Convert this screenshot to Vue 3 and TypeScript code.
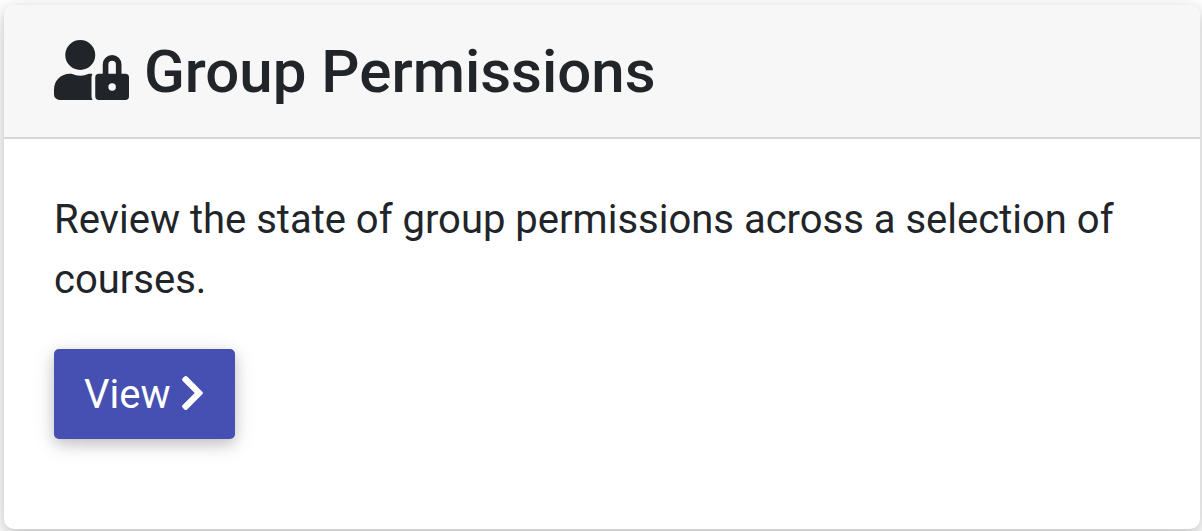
<script setup lang="ts">
const title: string = 'Group Permissions'
const description: string = 'Review the state of group permissions across a selection of courses.'
</script>

<template>
  <main class="page">
    <section class="card">
      <header class="card-header">
        <svg class="lock-icon" viewBox="0 0 640 512" aria-hidden="true">
          <path d="M224 256A128 128 0 1 0 96 128a128 128 0 0 0 128 128zm96 64a63.08 63.08 0 0 1 8.1-30.5c-4.8-.5-9.5-1.5-14.5-1.5h-16.7a174.08 174.08 0 0 1-145.8 0h-16.7A134.43 134.43 0 0 0 0 422.4V464a48 48 0 0 0 48 48h280.9a63.54 63.54 0 0 1-8.9-32zm288-32h-32v-80a80 80 0 0 0-160 0v80h-32a32 32 0 0 0-32 32v160a32 32 0 0 0 32 32h224a32 32 0 0 0 32-32V320a32 32 0 0 0-32-32zM496 432a32 32 0 1 1 32-32 32 32 0 0 1-32 32zm32-144h-64v-80a32 32 0 0 1 64 0z" />
        </svg>
        <h1>{{ title }}</h1>
      </header>
      <div class="card-body">
        <p>{{ description }}</p>
        <button type="button" class="view-button">
          <span>View</span>
          <svg class="chevron" viewBox="0 0 320 512" aria-hidden="true">
            <path d="M285.476 272.971L91.132 467.314c-9.373 9.373-24.569 9.373-33.941 0l-22.667-22.667c-9.357-9.357-9.375-24.522-.04-33.901L188.505 256 34.484 101.255c-9.335-9.379-9.317-24.544.04-33.901l22.667-22.667c9.373-9.373 24.569-9.373 33.941 0L285.475 239.03c9.373 9.372 9.373 24.568.001 33.941z" />
          </svg>
        </button>
      </div>
    </section>
  </main>
</template>

<style>
body {
  margin: 0;
  background: #fff;
}
</style>

<style scoped>
.page {
  box-sizing: border-box;
  min-height: 100vh;
  display: flex;
  padding: 5px 2px 2px 4px;
  font-family: Roboto, "Liberation Sans", sans-serif;
  color: #212529;
}
.card {
  flex: 1;
  background: #fff;
  border-radius: 10px;
  overflow: hidden;
  box-shadow: 0 5px 13px rgba(0, 0, 0, 0.16), 0 5px 25px rgba(0, 0, 0, 0.12);
}
.card-header {
  display: flex;
  align-items: center;
  gap: 15px;
  padding: 31px 50px 29px;
  background: #f7f7f7;
  border-bottom: 2px solid #d8d8d8;
}
.lock-icon {
  width: 75px;
  height: 60px;
  margin-bottom: 4px;
  fill: currentColor;
}
h1 {
  margin: 0;
  font-size: 60px;
  line-height: 72px;
  font-weight: 500;
}
.card-body {
  padding: 51px 50px 50px;
}
p {
  margin: 0 0 39px;
  font-size: 40px;
  line-height: 60px;
}
.view-button {
  display: inline-flex;
  align-items: center;
  gap: 10px;
  height: 90px;
  padding: 2px 30px 0;
  border: 0;
  border-radius: 5px;
  background: #464fb2;
  color: #fff;
  font-family: inherit;
  font-size: 40px;
  line-height: 60px;
  box-shadow: 0 5px 13px rgba(0, 0, 0, 0.16), 0 5px 25px rgba(0, 0, 0, 0.12);
}
.chevron {
  width: 25px;
  height: 40px;
  margin-bottom: 4px;
  fill: currentColor;
}
</style>
